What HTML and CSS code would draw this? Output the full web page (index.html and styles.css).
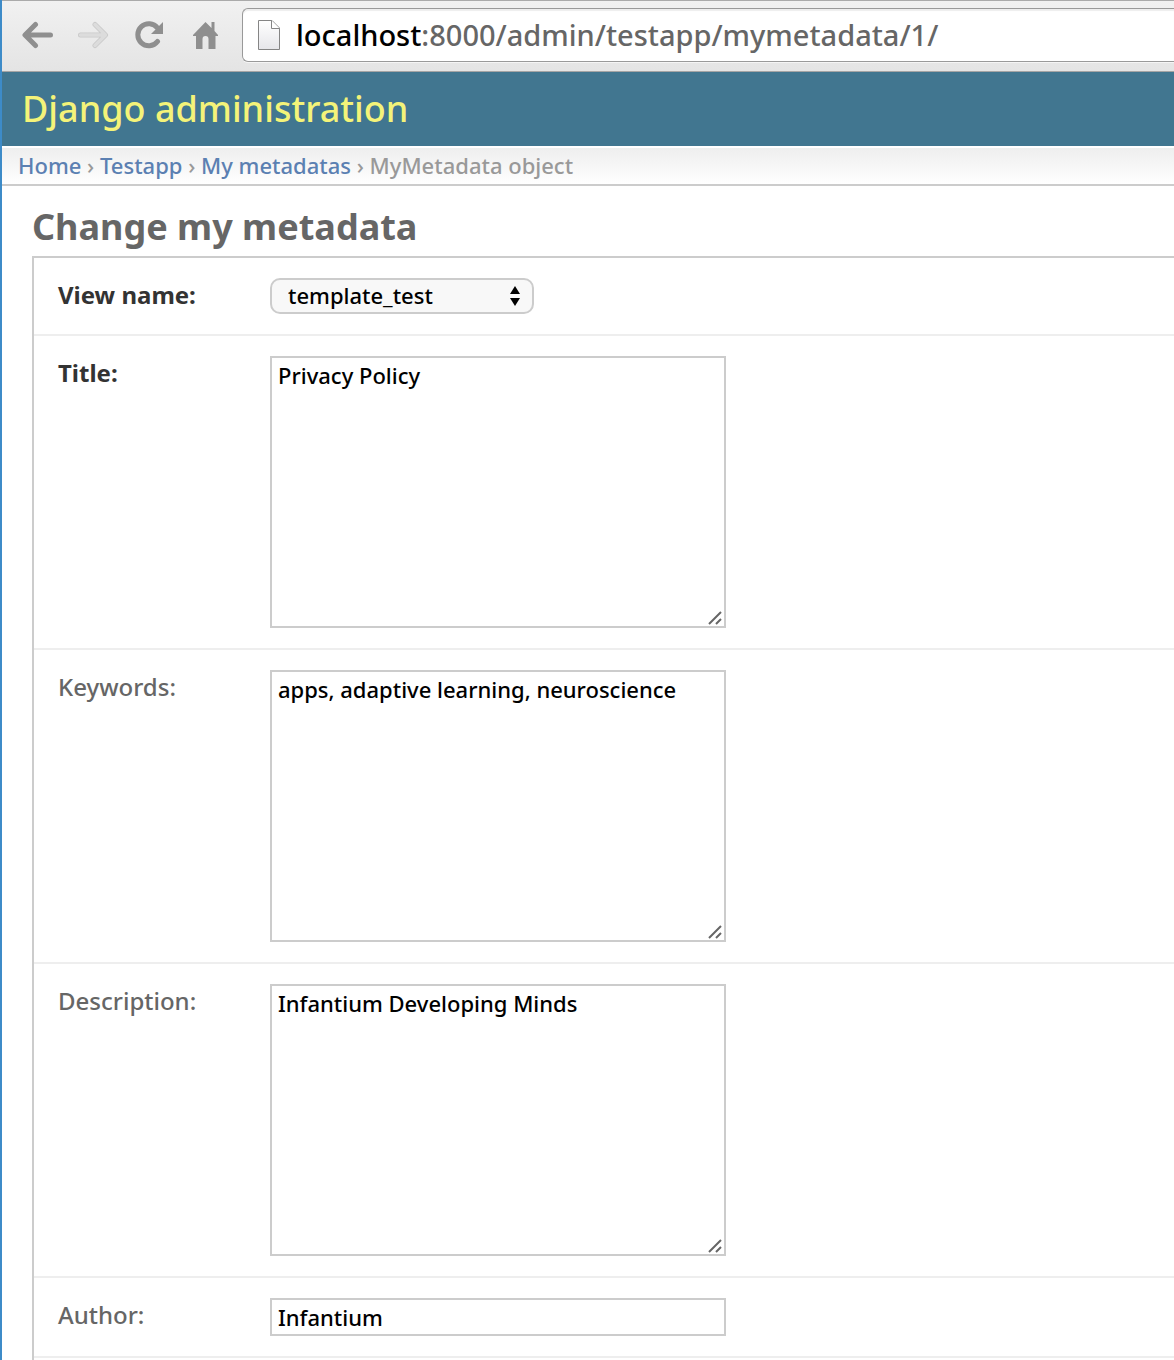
FILE: index.html
```html
<!DOCTYPE html>
<html lang="en">
<head>
<meta charset="utf-8">
<title>Change my metadata | Django site admin</title>
<link rel="stylesheet" href="styles.css">
</head>
<body>
<div class="toolbar">
  <div class="nav-buttons">
    <button class="nav-button" type="button" aria-label="Back">
      <svg width="32" height="28" viewBox="0 0 32 28" fill="none" stroke="#8f8f8f" stroke-width="5" stroke-linecap="round" stroke-linejoin="round"><path d="M28.500 14H4M13.500 3.500L3 14L13.500 24.500"/></svg>
    </button>
    <button class="nav-button" type="button" aria-label="Forward" disabled>
      <svg width="32" height="28" viewBox="0 0 32 28" fill="none" stroke-linecap="round" stroke-linejoin="round"><path stroke="#c9c9c9" stroke-width="5" d="M2.500 14H27M17 3.500L27.500 14L17 24.500"/><path stroke="#dcdcdc" stroke-width="3.500" d="M2.500 14H27M17 3.500L27.500 14L17 24.500"/></svg>
    </button>
    <button class="nav-button" type="button" aria-label="Reload">
      <svg width="32" height="28" viewBox="0 0 32 28"><path d="M23.500 20.500A11 11 0 1 1 23.500 7" fill="none" stroke="#8f8f8f" stroke-width="5" stroke-linecap="round"/><path d="M29 1V13H17Z" fill="#8f8f8f"/></svg>
    </button>
    <button class="nav-button" type="button" aria-label="Home">
      <svg width="32" height="28" viewBox="0 0 32 28"><path fill="#8f8f8f" d="M15.500 1L21.500 7V1H24.500V10L28 14V15H25.500V28H18.500V18A3 3 0 0 0 12.500 18V28H6V15H3V14Z"/></svg>
    </button>
  </div>
  <div class="address">
    <svg class="page-icon" width="24" height="32" viewBox="0 0 24 32"><defs><linearGradient id="sheet" x1="0" y1="0" x2="0" y2="1"><stop offset="0" stop-color="#fff"/><stop offset="1" stop-color="#e6e6ea"/></linearGradient></defs><path d="M1.500 1.500H15L22.500 9V30.500H1.500Z" fill="url(#sheet)" stroke="#858585"/><path d="M14.500 1.500V9.500H22.500" fill="#fff" stroke="#858585"/></svg>
    <div class="url"><span class="host">localhost</span>:8000/admin/testapp/mymetadata/1/</div>
  </div>
</div>
<header class="branding">Django administration</header>
<nav class="breadcrumbs" aria-label="Breadcrumbs"><a href="#">Home</a> › <a href="#">Testapp</a> › <a href="#">My metadatas</a> › MyMetadata object</nav>
<main class="content">
  <h1 class="title">Change my metadata</h1>
  <form class="module">
    <div class="form-row">
      <label class="label required" for="view">View name:</label>
      <div class="select-wrap">
        <select class="select" id="view"><option>template_test</option></select>
        <svg class="arrows" width="10" height="20" viewBox="0 0 10 20"><path d="M5 0L10 8H0ZM0 12H10L5 20Z"/></svg>
      </div>
    </div>
    <div class="form-row">
      <label class="label required" for="title">Title:</label>
      <div class="area-wrap">
        <textarea class="field area" id="title">Privacy Policy</textarea>
        <svg class="grip" width="14" height="14" viewBox="0 0 14 14"><path d="M1 13L13 1M8 13L13 8"/></svg>
      </div>
    </div>
    <div class="form-row">
      <label class="label" for="keywords">Keywords:</label>
      <div class="area-wrap">
        <textarea class="field area" id="keywords">apps, adaptive learning, neuroscience</textarea>
        <svg class="grip" width="14" height="14" viewBox="0 0 14 14"><path d="M1 13L13 1M8 13L13 8"/></svg>
      </div>
    </div>
    <div class="form-row">
      <label class="label" for="description">Description:</label>
      <div class="area-wrap">
        <textarea class="field area" id="description">Infantium Developing Minds</textarea>
        <svg class="grip" width="14" height="14" viewBox="0 0 14 14"><path d="M1 13L13 1M8 13L13 8"/></svg>
      </div>
    </div>
    <div class="form-row">
      <label class="label" for="author">Author:</label>
      <input class="field line" id="author" type="text" value="Infantium">
    </div>
  </form>
</main>
</body>
</html>
```
FILE: styles.css
```css
* {
  box-sizing: border-box;
}

body {
  display: flex;
  flex-direction: column;
  min-height: 100vh;
  margin: 0;
  border-left: 2px solid #3d8bc8;
  background: #fff;
  color: #666;
  font-family: "Lucida Grande", "Noto Sans", "Open Sans", sans-serif;
  font-size: 22px;
  font-weight: 500;
}

.toolbar {
  display: flex;
  align-items: center;
  gap: 20px;
  height: 72px;
  padding: 0 0 2px 20px;
  border-top: 1px solid #aaa;
  border-bottom: 1px solid #a5a5a5;
  background: linear-gradient(#f1f1f1, #e4e4e4);
}

.nav-buttons {
  display: flex;
  gap: 24px;
}

.nav-button {
  display: flex;
  flex: none;
  padding: 0;
  border: 0;
  background: none;
}

.address {
  display: flex;
  flex: 1;
  align-items: center;
  gap: 15px;
  height: 54px;
  padding-left: 14px;
  border: 1px solid #999;
  border-right: 0;
  border-radius: 6px 0 0 6px;
  background: #fff;
  box-shadow: inset 0 2px 1px #eee, 0 1px 0 #f5f5f5;
}

.page-icon {
  flex: none;
}

.url {
  font-size: 29px;
  line-height: 40px;
  white-space: nowrap;
}

.host {
  color: #000;
}

.branding {
  padding: 12px 20px;
  background: #417690;
  color: #f4f379;
  font-size: 36px;
  line-height: 50px;
}

.breadcrumbs {
  padding: 0 16px 2px;
  border-top: 2px solid #fff;
  border-bottom: 2px solid #ccc;
  background: linear-gradient(#eee, #fff) padding-box;
  color: #999;
  line-height: 34px;
}

.breadcrumbs a {
  color: #5b80b2;
  text-decoration: none;
}

.content {
  display: flex;
  flex: 1;
  flex-direction: column;
  padding-left: 30px;
}

.title {
  margin: 16px 0 4px;
  font-size: 36px;
  line-height: 50px;
}

.module {
  flex: 1;
  border: 2px solid #ccc;
  border-right: 0;
  border-bottom: 0;
}

.form-row {
  display: flex;
  padding: 20px 24px;
  border-bottom: 2px solid #eee;
}

.label {
  flex: none;
  width: 212px;
  font-size: 24px;
  line-height: 34px;
}

.required {
  color: #333;
  font-weight: bold;
}

.select-wrap,
.area-wrap {
  position: relative;
  display: flex;
}

.select {
  width: 264px;
  height: 36px;
  padding: 0 16px 2px;
  border: 2px solid #ccc;
  border-radius: 10px;
  background: #f8f8f8;
  color: #000;
  font: inherit;
  line-height: 30px;
  appearance: none;
}

.arrows {
  position: absolute;
  top: 8px;
  right: 14px;
  pointer-events: none;
}

.field {
  width: 456px;
  margin: 0;
  border: 2px solid #ccc;
  border-radius: 0;
  background: #fff;
  color: #000;
  font: inherit;
  outline: 0;
}

.area {
  height: 272px;
  padding: 4px 6px;
  line-height: 26px;
  resize: none;
}

.line {
  height: 38px;
  padding: 2px 6px;
}

.grip {
  position: absolute;
  right: 4px;
  bottom: 3px;
  fill: none;
  stroke: #666;
  stroke-width: 2;
  pointer-events: none;
}
```
